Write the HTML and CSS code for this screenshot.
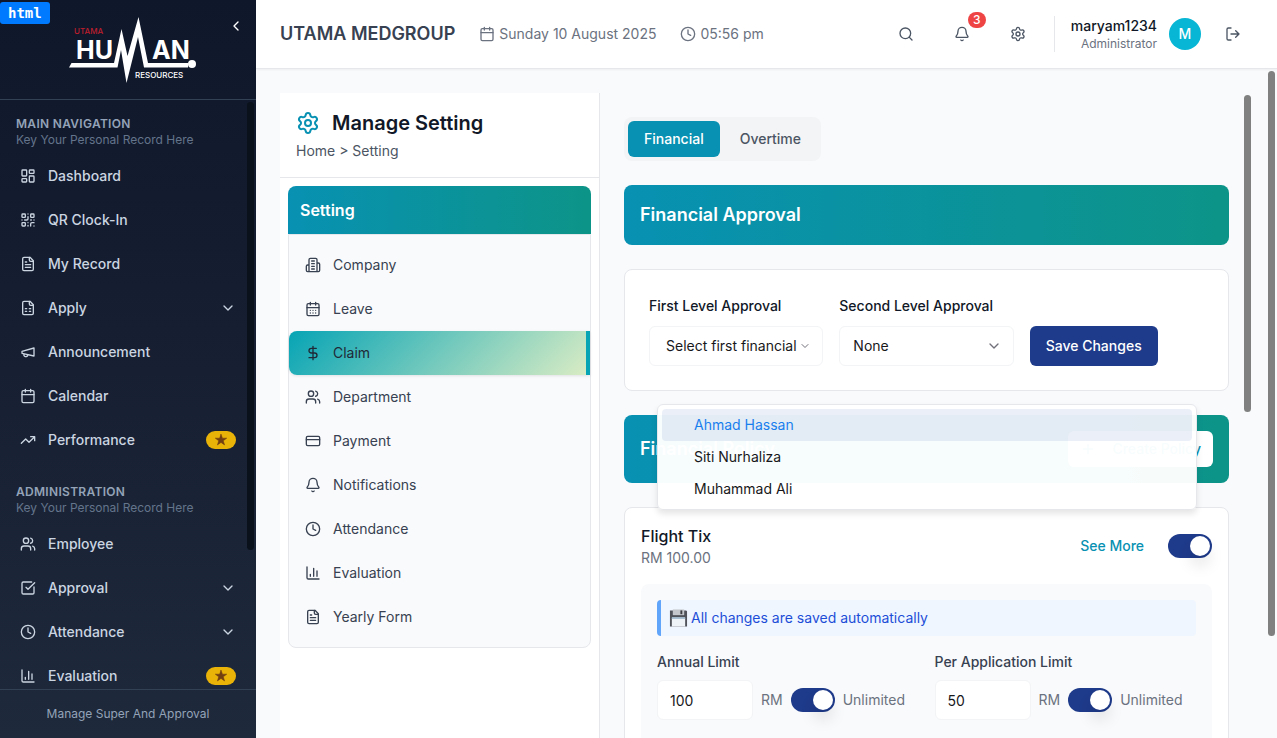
FILE: index.html
```html
<!DOCTYPE html>
<html lang="en">
<head>
<meta charset="utf-8">
<meta name="viewport" content="width=device-width, initial-scale=1">
<title>Manage Setting</title>
<link rel="stylesheet" href="styles.css">
</head>
<body>
<svg class="sprite" aria-hidden="true">
  <symbol id="dashboard" viewBox="0 0 24 24"><rect x="3" y="3" width="7" height="9" rx="1"/><rect x="14" y="3" width="7" height="5" rx="1"/><rect x="14" y="12" width="7" height="9" rx="1"/><rect x="3" y="16" width="7" height="5" rx="1"/></symbol>
  <symbol id="qr" viewBox="0 0 24 24"><rect x="3" y="3" width="5" height="5" rx="1"/><rect x="16" y="3" width="5" height="5" rx="1"/><rect x="3" y="16" width="5" height="5" rx="1"/><path d="M21 16h-3a2 2 0 0 0-2 2v3M21 21v.01M12 7v3a2 2 0 0 1-2 2H7M3 12h.01M12 3h.01M12 16v.01M16 12h1M21 12v.01M12 21v-1"/></symbol>
  <symbol id="file" viewBox="0 0 24 24"><path d="M15 2H6a2 2 0 0 0-2 2v16a2 2 0 0 0 2 2h12a2 2 0 0 0 2-2V7Z"/><path d="M14 2v4a2 2 0 0 0 2 2h4M10 9H8M16 13H8M16 17H8"/></symbol>
  <symbol id="sheet" viewBox="0 0 24 24"><path d="M15 2H6a2 2 0 0 0-2 2v16a2 2 0 0 0 2 2h12a2 2 0 0 0 2-2V7Z"/><path d="M14 2v4a2 2 0 0 0 2 2h4M8 13h2M14 13h2M8 17h2M14 17h2"/></symbol>
  <symbol id="megaphone" viewBox="0 0 24 24"><path d="m3 11 18-5v12L3 14v-3zM11.6 16.8a3 3 0 1 1-5.8-1.6"/></symbol>
  <symbol id="calendar" viewBox="0 0 24 24"><path d="M8 2v4M16 2v4M3 10h18"/><rect x="3" y="4" width="18" height="18" rx="2"/></symbol>
  <symbol id="days" viewBox="0 0 24 24"><path d="M8 2v4M16 2v4M3 10h18M8 14h.01M12 14h.01M16 14h.01M8 18h.01M12 18h.01M16 18h.01"/><rect x="3" y="4" width="18" height="18" rx="2"/></symbol>
  <symbol id="trend" viewBox="0 0 24 24"><path d="m22 7-8.5 8.5-5-5L2 17M16 7h6v6"/></symbol>
  <symbol id="users" viewBox="0 0 24 24"><path d="M16 21v-2a4 4 0 0 0-4-4H6a4 4 0 0 0-4 4v2"/><circle cx="9" cy="7" r="4"/><path d="M22 21v-2a4 4 0 0 0-3-3.87M16 3.13a4 4 0 0 1 0 7.75"/></symbol>
  <symbol id="check" viewBox="0 0 24 24"><path d="M21 10.5V19a2 2 0 0 1-2 2H5a2 2 0 0 1-2-2V5a2 2 0 0 1 2-2h12.5M9 11l3 3L22 4"/></symbol>
  <symbol id="clock" viewBox="0 0 24 24"><circle cx="12" cy="12" r="10"/><path d="M12 6v6l4 2"/></symbol>
  <symbol id="chart" viewBox="0 0 24 24"><path d="M3 3v16a2 2 0 0 0 2 2h16M18 17V9M13 17V5M8 17v-3"/></symbol>
  <symbol id="building" viewBox="0 0 24 24"><path d="M6 22V4a2 2 0 0 1 2-2h8a2 2 0 0 1 2 2v18ZM6 12H4a2 2 0 0 0-2 2v6a2 2 0 0 0 2 2h2M18 9h2a2 2 0 0 1 2 2v9a2 2 0 0 1-2 2h-2M10 6h4M10 10h4M10 14h4M10 18h4"/></symbol>
  <symbol id="dollar" viewBox="0 0 24 24"><path d="M12 2v20M17 5H9.500a3.500 3.500 0 0 0 0 7h5a3.500 3.500 0 0 1 0 7H6"/></symbol>
  <symbol id="card" viewBox="0 0 24 24"><rect x="2" y="5" width="20" height="14" rx="2"/><path d="M2 10h20"/></symbol>
  <symbol id="bell" viewBox="0 0 24 24"><path d="M10.268 21a2 2 0 0 0 3.464 0M3.262 15.326A1 1 0 0 0 4 17h16a1 1 0 0 0 .74-1.673C19.410 13.956 18 12.499 18 8A6 6 0 0 0 6 8c0 4.499-1.411 5.956-2.738 7.326"/></symbol>
  <symbol id="gear" viewBox="0 0 24 24"><path d="M9.671 4.136a2.340 2.340 0 0 1 4.659 0 2.340 2.340 0 0 0 3.319 1.915 2.340 2.340 0 0 1 2.330 4.033 2.340 2.340 0 0 0 0 3.831 2.340 2.340 0 0 1-2.330 4.033 2.340 2.340 0 0 0-3.319 1.915 2.340 2.340 0 0 1-4.659 0 2.340 2.340 0 0 0-3.320-1.915 2.340 2.340 0 0 1-2.330-4.033 2.340 2.340 0 0 0 0-3.831A2.340 2.340 0 0 1 6.350 6.051a2.340 2.340 0 0 0 3.319-1.915"/><circle cx="12" cy="12" r="3"/></symbol>
  <symbol id="search" viewBox="0 0 24 24"><circle cx="11" cy="11" r="8"/><path d="m21 21-4.300-4.300"/></symbol>
  <symbol id="logout" viewBox="0 0 24 24"><path d="M9 21H5a2 2 0 0 1-2-2V5a2 2 0 0 1 2-2h4M16 17l5-5-5-5M21 12H9"/></symbol>
  <symbol id="down" viewBox="0 0 24 24"><path d="m6 9 6 6 6-6"/></symbol>
  <symbol id="left" viewBox="0 0 24 24"><path d="m15 18-6-6 6-6"/></symbol>
  <symbol id="plus" viewBox="0 0 24 24"><path d="M5 12h14M12 5v14"/></symbol>
  <symbol id="star" viewBox="0 0 24 24"><path fill="currentColor" stroke-width="1" d="M12 0l2.900 8.300H23.500L16.600 13.500 19.200 22 12 16.900 4.800 22 7.400 13.500.5 8.300H9.100z"/></symbol>
</svg>

<div class="tag">html</div>

<div class="app">
  <aside class="sidebar">
    <div class="brand">
      <svg class="logo" viewBox="0 0 128 68" role="img" aria-label="Utama Human Resources">
        <text class="logo-utama" x="5" y="18">UTAMA</text>
        <text class="logo-name" x="7" y="43">HU</text>
        <text class="logo-name" x="83" y="43">AN</text>
        <text class="logo-res" x="66" y="62">RESOURCES</text>
        <path fill="#fff" d="M0 51.500L2.500 47H45L52.500 13L58.500 40L69.500 1L79 47H119V51.500H75L69 21L57.500 67L52 34L48.500 51.500Z"/>
        <circle cx="123" cy="48" r="4" fill="#fff"/>
      </svg>
      <button class="collapse" aria-label="Collapse menu"><svg class="icon"><use href="#left"/></svg></button>
    </div>
    <nav class="nav">
      <section class="nav-group">
        <h2>MAIN NAVIGATION</h2>
        <p>Key Your Personal Record Here</p>
        <ul>
          <li><a href="#"><svg class="icon"><use href="#dashboard"/></svg><span>Dashboard</span></a></li>
          <li><a href="#"><svg class="icon"><use href="#qr"/></svg><span>QR Clock-In</span></a></li>
          <li><a href="#"><svg class="icon"><use href="#file"/></svg><span>My Record</span></a></li>
          <li><button><svg class="icon"><use href="#sheet"/></svg><span>Apply</span><svg class="icon"><use href="#down"/></svg></button></li>
          <li><a href="#"><svg class="icon"><use href="#megaphone"/></svg><span>Announcement</span></a></li>
          <li><a href="#"><svg class="icon"><use href="#calendar"/></svg><span>Calendar</span></a></li>
          <li><a href="#"><svg class="icon"><use href="#trend"/></svg><span>Performance</span><b class="star"><svg class="icon-sm"><use href="#star"/></svg></b></a></li>
        </ul>
      </section>
      <section class="nav-group">
        <h2>ADMINISTRATION</h2>
        <p>Key Your Personal Record Here</p>
        <ul>
          <li><a href="#"><svg class="icon"><use href="#users"/></svg><span>Employee</span></a></li>
          <li><button><svg class="icon"><use href="#check"/></svg><span>Approval</span><svg class="icon"><use href="#down"/></svg></button></li>
          <li><button><svg class="icon"><use href="#clock"/></svg><span>Attendance</span><svg class="icon"><use href="#down"/></svg></button></li>
          <li><a href="#"><svg class="icon"><use href="#chart"/></svg><span>Evaluation</span><b class="star"><svg class="icon-sm"><use href="#star"/></svg></b></a></li>
        </ul>
      </section>
      <i class="thumb thumb-nav"></i>
    </nav>
    <footer class="side-foot">Manage Super And Approval</footer>
  </aside>

  <div class="main">
    <header class="topbar">
      <h1>UTAMA MEDGROUP</h1>
      <div class="when">
        <span><svg class="icon"><use href="#calendar"/></svg>Sunday 10 August 2025</span>
        <span><svg class="icon"><use href="#clock"/></svg>05:56 pm</span>
      </div>
      <div class="tools">
        <button class="tool" aria-label="Search"><svg class="icon"><use href="#search"/></svg></button>
        <button class="tool" aria-label="Notifications"><svg class="icon"><use href="#bell"/></svg><span class="count">3</span></button>
        <button class="tool" aria-label="Settings"><svg class="icon"><use href="#gear"/></svg></button>
        <div class="user">
          <div class="who"><strong>maryam1234</strong><small>Administrator</small></div>
          <span class="avatar">M</span>
          <button class="tool" aria-label="Log out"><svg class="icon"><use href="#logout"/></svg></button>
        </div>
      </div>
    </header>

    <div class="workspace">
      <section class="settings">
        <div class="settings-head">
          <h2><svg class="icon-lg"><use href="#gear"/></svg>Manage Setting</h2>
          <p>Home &gt; Setting</p>
        </div>
        <div class="menu">
          <h3>Setting</h3>
          <ul>
            <li><a href="#"><svg class="icon"><use href="#building"/></svg>Company</a></li>
            <li><a href="#"><svg class="icon"><use href="#days"/></svg>Leave</a></li>
            <li><a href="#" class="active"><svg class="icon"><use href="#dollar"/></svg>Claim</a></li>
            <li><a href="#"><svg class="icon"><use href="#users"/></svg>Department</a></li>
            <li><a href="#"><svg class="icon"><use href="#card"/></svg>Payment</a></li>
            <li><a href="#"><svg class="icon"><use href="#bell"/></svg>Notifications</a></li>
            <li><a href="#"><svg class="icon"><use href="#clock"/></svg>Attendance</a></li>
            <li><a href="#"><svg class="icon"><use href="#chart"/></svg>Evaluation</a></li>
            <li><a href="#"><svg class="icon"><use href="#file"/></svg>Yearly Form</a></li>
          </ul>
        </div>
      </section>

      <main class="panel">
        <div class="tabs" role="tablist">
          <button role="tab" aria-selected="true">Financial</button>
          <button role="tab" aria-selected="false">Overtime</button>
        </div>

        <div class="banner"><h2>Financial Approval</h2></div>

        <form class="card approval">
          <div class="field">
            <label for="first">First Level Approval</label>
            <div class="select select-open">
              <select id="first"><option>Select first financial</option></select>
              <svg class="icon-sm"><use href="#down"/></svg>
            </div>
          </div>
          <div class="field">
            <label for="second">Second Level Approval</label>
            <div class="select">
              <select id="second"><option>None</option></select>
              <svg class="icon"><use href="#down"/></svg>
            </div>
          </div>
          <button type="button" class="save">Save Changes</button>
        </form>

        <div class="banner">
          <h2>Financial Policy</h2>
          <button class="create"><svg class="icon"><use href="#plus"/></svg>Create Policy</button>
        </div>

        <section class="card policy">
          <div class="policy-head">
            <div><h3>Flight Tix</h3><p>RM 100.00</p></div>
            <a href="#">See More</a>
            <input type="checkbox" class="switch" aria-label="Flight Tix enabled" checked>
          </div>
          <div class="limits">
            <p class="note">
              <svg class="floppy" viewBox="0 0 20 18" aria-hidden="true">
                <path fill="#50535a" d="M1 1H18L19 2V18H1Z"/>
                <path fill="#c3c7cc" d="M4 0H16V6H4Z"/><path fill="#3a3c42" d="M12 1H14V5H12Z"/>
                <path fill="#eef3f8" d="M3 9H17V18H3Z"/><path fill="#a5bdd0" d="M3 8H17V10H3Z"/>
              </svg>
              All changes are saved automatically
            </p>
            <div class="limit-grid">
              <div class="limit">
                <label for="annual">Annual Limit</label>
                <div class="limit-row">
                  <input id="annual" type="text" value="100"><span>RM</span>
                  <input type="checkbox" class="switch" id="annual-un" checked><label for="annual-un">Unlimited</label>
                </div>
              </div>
              <div class="limit">
                <label for="per">Per Application Limit</label>
                <div class="limit-row">
                  <input id="per" type="text" value="50"><span>RM</span>
                  <input type="checkbox" class="switch" id="per-un" checked><label for="per-un">Unlimited</label>
                </div>
              </div>
            </div>
          </div>
        </section>

        <ul class="options" role="listbox" aria-label="First Level Approval">
          <li role="option" aria-selected="true">Ahmad Hassan</li>
          <li role="option" aria-selected="false">Siti Nurhaliza</li>
          <li role="option" aria-selected="false">Muhammad Ali</li>
        </ul>
      </main>
      <i class="thumb thumb-panel"></i>
      <i class="thumb thumb-page"></i>
    </div>
  </div>
</div>
</body>
</html>
```
FILE: styles.css
```css
*, *::before, *::after { box-sizing: border-box; }
body, h1, h2, h3, p, ul { margin: 0; padding: 0; }
ul { list-style: none; }
body {
  height: 100vh;
  overflow: hidden;
  background: #f8fafc;
  color: #111827;
  font-family: Inter, "Liberation Sans", sans-serif;
  font-size: 14px;
  line-height: 20px;
}
button, input, select { font: inherit; color: inherit; margin: 0; }
button { background: none; border: 0; padding: 0; cursor: pointer; }
a { color: inherit; text-decoration: none; }

.sprite { position: absolute; width: 0; height: 0; }
.icon, .icon-sm, .icon-lg {
  flex: none;
  display: block;
  width: 16px;
  height: 16px;
  fill: none;
  stroke: currentColor;
  stroke-width: 2;
  stroke-linecap: round;
  stroke-linejoin: round;
}
.icon-sm { width: 12px; height: 12px; }
.icon-lg { width: 24px; height: 24px; }

.tag {
  position: absolute;
  z-index: 5;
  top: 2px;
  left: 0;
  padding: 1px 8px;
  border-radius: 3px;
  background: #007bff;
  color: #fff;
  font: bold 14px/20px "DejaVu Sans Mono", monospace;
}

.app { display: grid; grid-template-columns: 256px minmax(0, 1fr); height: 100vh; }

/* Sidebar */
.sidebar {
  display: flex;
  flex-direction: column;
  min-height: 0;
  background: linear-gradient(#0f172a, #1e293b);
  color: #cbd5e1;
}
.brand {
  position: relative;
  display: flex;
  justify-content: center;
  padding: 16px 0 15px 10px;
  border-bottom: 1px solid #334155;
}
.logo { width: 128px; height: 68px; }
.logo text { fill: #fff; font-weight: 700; }
.logo .logo-utama { fill: #be1e2d; font-size: 8px; font-weight: 500; }
.logo .logo-name { font-size: 25px; }
.logo .logo-res { font-size: 8px; font-weight: 500; }
.collapse { position: absolute; top: 18px; right: 12px; color: #fff; }
.nav { position: relative; flex: 1; min-height: 0; overflow: hidden; padding: 16px 8px; }
.nav-group + .nav-group { margin-top: 24px; }
.nav-group h2, .nav-group p { padding: 0 8px; font-size: 12px; line-height: 16px; }
.nav-group h2 { color: #94a3b8; font-weight: 600; letter-spacing: 0.025em; }
.nav-group p { color: #64748b; }
.nav-group ul { display: grid; gap: 4px; margin-top: 8px; }
.nav-group a, .nav-group button {
  display: flex;
  align-items: center;
  gap: 12px;
  width: 100%;
  height: 40px;
  padding: 0 12px;
  font-weight: 500;
  text-align: left;
}
.nav-group span { flex: 1; }
.star {
  display: flex;
  padding: 3px 9px;
  border-radius: 9px;
  background: #eab308;
  color: #713f12;
}
.side-foot {
  padding: 16px;
  border-top: 1px solid #334155;
  color: #94a3b8;
  font-size: 12px;
  line-height: 16px;
  text-align: center;
}

/* Scroll thumbs lie over the scrolled content */
.thumb { position: absolute; width: 7px; border-radius: 4px; background: #7f807f; }
.thumb-nav { top: 2px; right: 2px; height: 448px; background: #0b111b; }
.thumb-panel { top: 26px; right: 26px; height: 317px; }
.thumb-page { top: 2px; right: 2px; height: 565px; }

/* Top bar */
.main { display: flex; flex-direction: column; min-width: 0; min-height: 0; }
.topbar {
  position: relative;
  z-index: 1;
  display: flex;
  align-items: center;
  height: 69px;
  padding: 0 24px;
  border-bottom: 1px solid #e5e7eb;
  background: #fff;
  box-shadow: 0 1px 2px rgba(0, 0, 0, 0.05);
}
.topbar h1 { color: #374151; font-size: 18px; line-height: 28px; font-weight: 600; }
.when { display: flex; gap: 24px; margin-left: 24px; color: #6b7280; }
.when span { display: flex; align-items: center; gap: 4px; }
.tools { display: flex; align-items: center; gap: 16px; margin-left: auto; color: #4b5563; }
.tool { position: relative; display: grid; place-items: center; width: 40px; height: 40px; }
.count {
  position: absolute;
  top: -2px;
  right: -4px;
  width: 18px;
  border-radius: 8px;
  background: #ef4444;
  color: #fff;
  font-size: 12px;
  line-height: 16px;
  font-weight: 500;
}
.user { display: flex; align-items: center; gap: 12px; padding-left: 16px; border-left: 1px solid #e5e7eb; }
.user .tool { height: 36px; }
.who { display: grid; text-align: right; }
.who strong { color: #111827; font-weight: 500; line-height: 20px; }
.who small { color: #6b7280; font-size: 12px; line-height: 16px; }
.avatar {
  width: 32px;
  border-radius: 50%;
  background: #06b6d4;
  color: #fff;
  font-weight: 500;
  line-height: 32px;
  text-align: center;
}

/* Workspace */
.workspace {
  position: relative;
  flex: 1;
  display: grid;
  grid-template-columns: 320px minmax(0, 1fr);
  min-height: 0;
  overflow: hidden;
  padding: 24px 24px 0;
}
.settings { border-right: 1px solid #e5e7eb; background: #fff; }
.settings-head { padding: 16px; border-bottom: 1px solid #e5e7eb; }
.settings-head h2 { display: flex; align-items: center; gap: 12px; font-size: 20px; line-height: 28px; font-weight: 600; }
.settings-head .icon-lg { color: #0891b2; }
.settings-head p { margin-top: 4px; color: #4b5563; }
.menu { padding: 8px; }
.menu h3 {
  padding: 12px;
  border-radius: 8px 8px 0 0;
  background: linear-gradient(90deg, #0891b2, #0d9488);
  color: #fff;
  font-size: 16px;
  line-height: 24px;
  font-weight: 600;
}
.menu ul { padding: 8px 0; border: 1px solid #e5e7eb; border-radius: 0 0 8px 8px; background: #f9fafb; }
.menu a { display: flex; align-items: center; gap: 12px; height: 44px; padding: 0 16px; color: #374151; }
.menu .active {
  border-right: 4px solid #06a4b5;
  border-radius: 8px 0 0 8px;
  background: linear-gradient(135deg, #06a4b5, #d9ecc4);
  box-shadow: 0 1px 3px rgba(0, 0, 0, 0.1);
  color: #1f2937;
}

.panel { position: relative; display: flex; flex-direction: column; gap: 24px; padding: 24px 24px 0; }
.tabs { display: flex; gap: 4px; align-self: flex-start; padding: 4px; border-radius: 8px; background: #f3f4f6; }
.tabs button { height: 36px; padding: 0 16px; border-radius: 6px; color: #4b5563; font-weight: 500; }
.tabs [aria-selected="true"] { background: #0891b2; color: #fff; }

.banner {
  display: flex;
  align-items: center;
  justify-content: space-between;
  padding: 16px;
  border-radius: 8px;
  background: linear-gradient(90deg, #0891b2, #0d9488);
}
.banner h2 { color: #fff; font-size: 18px; line-height: 28px; font-weight: 600; }
.create {
  display: flex;
  align-items: center;
  gap: 16px;
  height: 36px;
  padding: 0 12px;
  border-radius: 6px;
  background: #fff;
  color: #0891b2;
  font-weight: 500;
}

.card { border: 1px solid #e5e7eb; border-radius: 8px; background: #fff; }
.approval { display: grid; grid-template-columns: repeat(3, minmax(0, 1fr)); gap: 16px; padding: 24px; align-items: end; }
.field { display: grid; gap: 8px; }
.field label { font-weight: 500; line-height: 24px; }
.select { position: relative; color: #18181b; }
.select select {
  appearance: none;
  width: 100%;
  height: 40px;
  padding: 0 32px 0 13px;
  border: 1px solid #f3f4f6;
  border-radius: 6px;
  background: #fff;
}
.select-open select { padding: 0 16px; }
.select svg { position: absolute; top: 12px; right: 12px; color: #71717a; }
.select .icon-sm { top: 14px; }
.save { justify-self: start; height: 40px; padding: 0 16px; border-radius: 6px; background: #1e3a8a; color: #fff; font-weight: 500; }

.policy { padding: 16px; }
.policy-head { display: flex; align-items: center; gap: 24px; }
.policy-head div { flex: 1; }
.policy-head h3 { font-size: 16px; line-height: 24px; font-weight: 500; }
.policy-head p { color: #6b7280; }
.policy-head a { color: #0891b2; font-weight: 500; }
.switch {
  appearance: none;
  flex: none;
  width: 44px;
  height: 24px;
  padding: 2px;
  border-radius: 12px;
  background: #1e3a8a;
}
.switch::before {
  content: "";
  display: block;
  width: 20px;
  height: 20px;
  margin-left: 20px;
  border-radius: 50%;
  background: #fff;
  box-shadow: 0 10px 15px rgba(0, 0, 0, 0.1);
}
.limits { margin-top: 16px; padding: 16px 16px 64px; border-radius: 8px; background: #f9fafb; }
.note {
  display: flex;
  align-items: center;
  gap: 3px;
  padding: 8px;
  border-left: 4px solid #60a5fa;
  border-radius: 4px;
  background: #eff6ff;
  color: #1d4ed8;
}
.floppy { width: 19px; height: 18px; }
.limit-grid { display: grid; grid-template-columns: 1fr 1fr; gap: 16px; margin-top: 16px; }
.limit > label { display: block; color: #374151; font-weight: 500; }
.limit-row { display: flex; align-items: center; gap: 8px; margin-top: 8px; color: #6b7280; }
.limit-row input[type="text"] {
  width: 96px;
  height: 40px;
  padding: 0 12px;
  border: 1px solid #f3f4f6;
  border-radius: 6px;
  background: #fff;
  color: #18181b;
}

.options {
  position: absolute;
  z-index: 2;
  top: 311px;
  left: 57px;
  right: 56px;
  padding: 4px;
  border: 1px solid #e5e7eb;
  border-radius: 6px;
  background: rgba(255, 255, 255, 0.97);
  box-shadow: 0 4px 6px rgba(0, 0, 0, 0.1);
}
.options li { padding: 6px 32px; border-radius: 4px; color: #18181b; }
.options [aria-selected="true"] { background: rgba(30, 74, 168, 0.09); color: #1a7fee; }
```
